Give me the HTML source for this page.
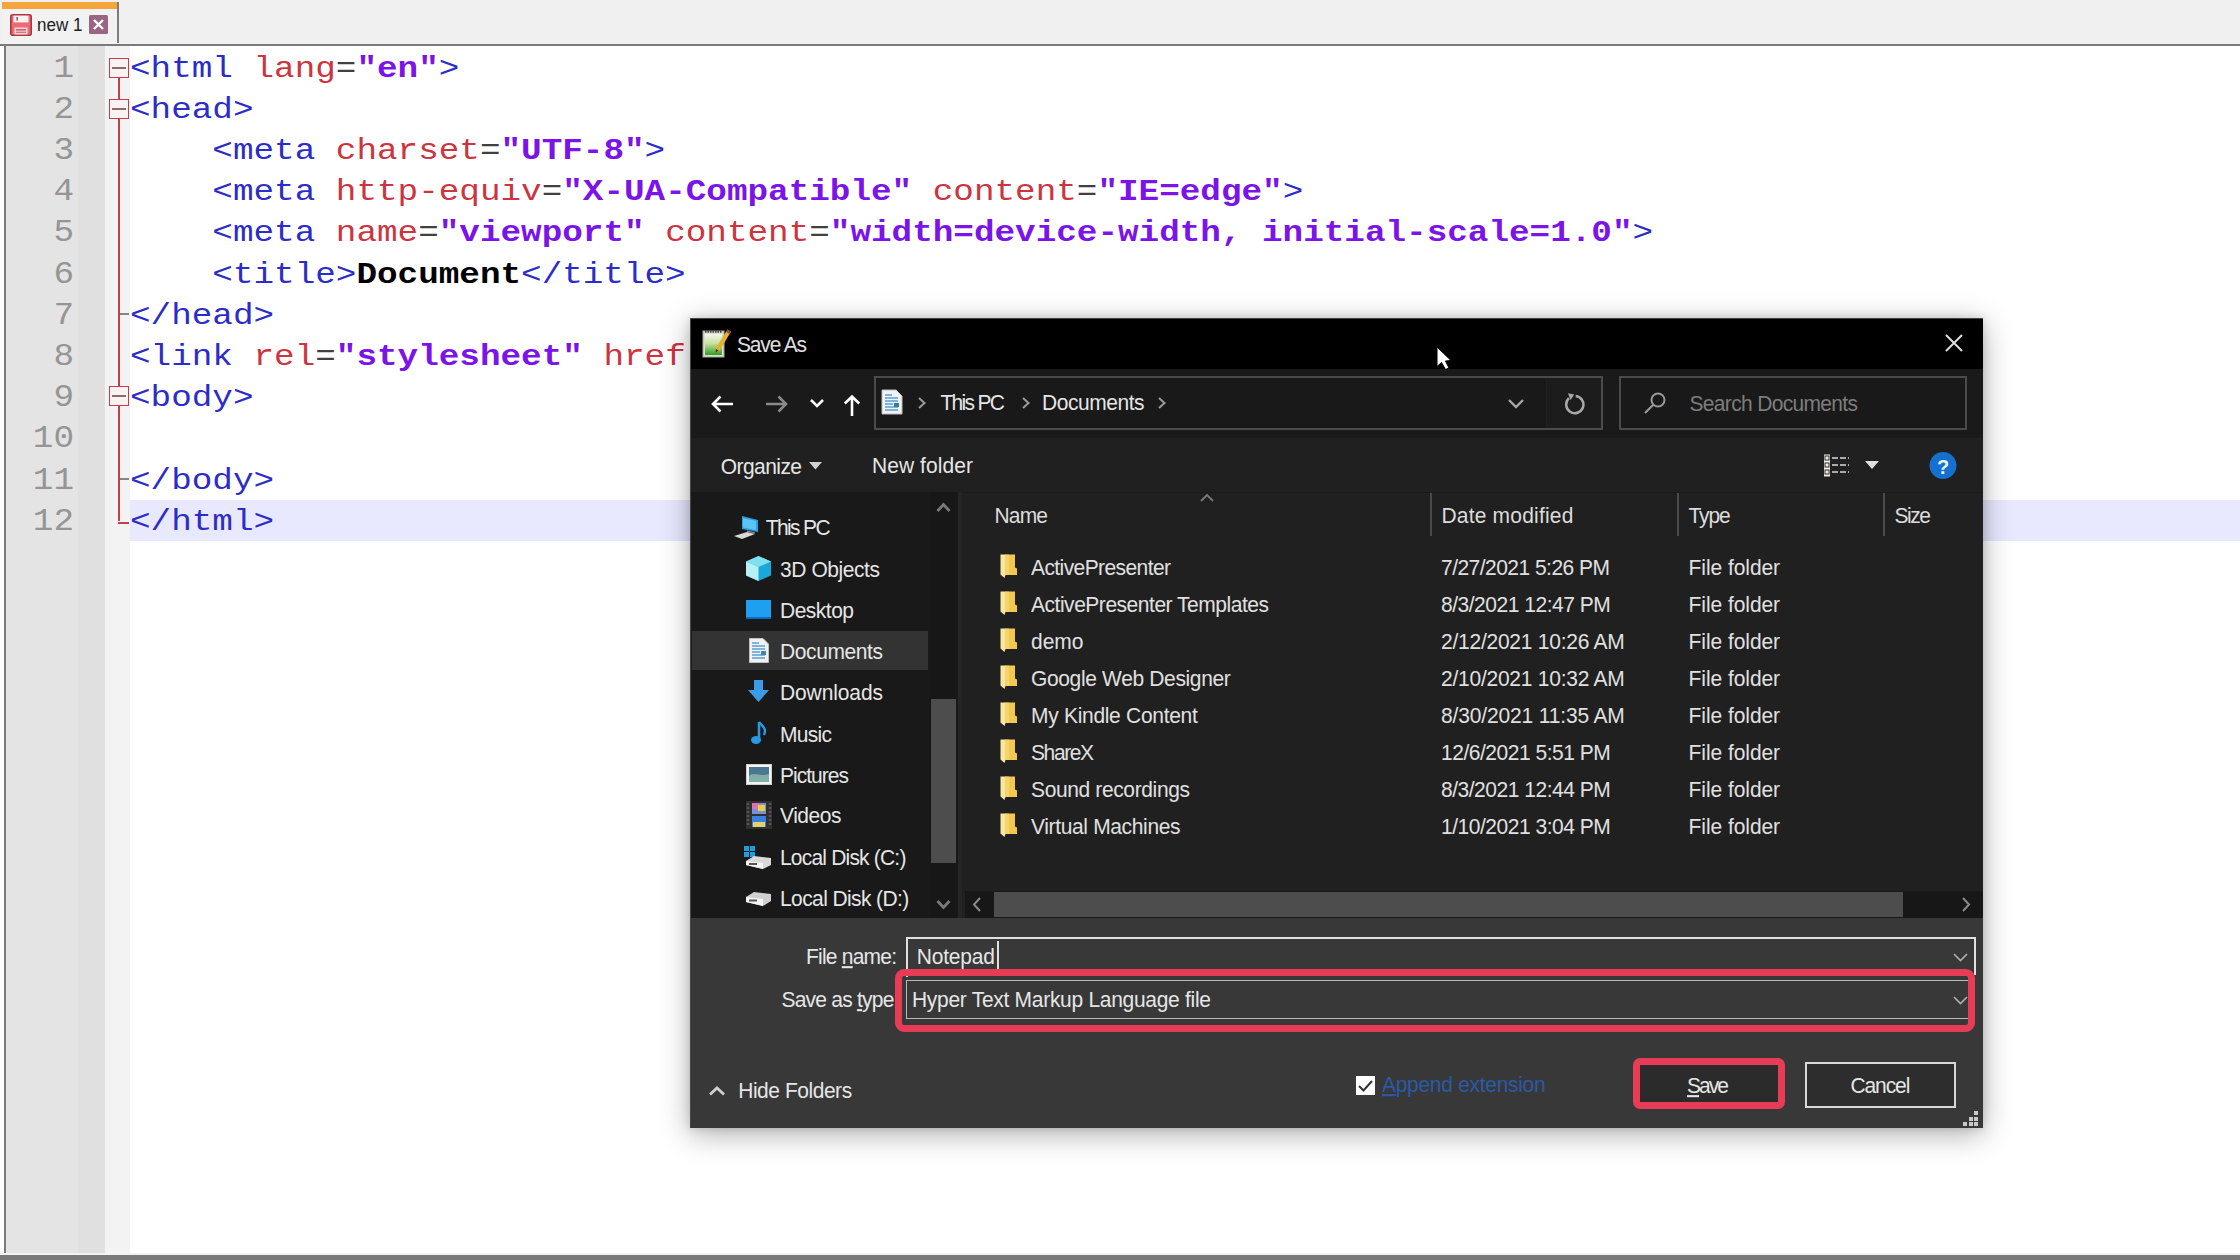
<!DOCTYPE html><html><head><meta charset="utf-8"><style>
*{margin:0;padding:0;box-sizing:border-box}
html,body{width:2240px;height:1260px;overflow:hidden;background:#fff;position:relative;font-family:"Liberation Sans",sans-serif}
.a{position:absolute}
.t{position:absolute;white-space:pre;line-height:1;font-family:"Liberation Sans",sans-serif}
.c{position:absolute;white-space:pre;line-height:1;font-family:"Liberation Mono",monospace;font-size:34.3px;color:#2c2cc8;transform:scaleY(0.87);transform-origin:0 26.3px}
.c b{color:#7a14e8}
.c i{font-style:normal;color:#cc3440}
.c u{text-decoration:none;color:#404040}
.c s{text-decoration:none;color:#000;font-weight:bold}
.ln{position:absolute;white-space:pre;line-height:1;font-family:"Liberation Mono",monospace;font-size:34.3px;color:#959595;text-align:right;width:70px;left:4px;transform:scaleY(0.93);transform-origin:0 26.3px}
</style></head><body>
<div class="a" style="left:0;top:0;width:2240px;height:44px;background:#f0f0f0"></div>
<div class="a" style="left:2px;top:2px;width:116px;height:42px;background:#f2f2f2"></div>
<div class="a" style="left:2px;top:2px;width:115px;height:7px;background:#f4a63c"></div>
<div class="a" style="left:117px;top:2px;width:2px;height:41px;background:#7d7d7d"></div>
<svg class="a" style="left:10px;top:14px" width="22" height="22" viewBox="0 0 22 22">
<rect x="0.8" y="0.8" width="20.4" height="20.4" rx="2" fill="#ee6a72" stroke="#a83840" stroke-width="1.6"/>
<rect x="3.5" y="1.6" width="15" height="6.8" fill="#fff0f0"/>
<rect x="6.5" y="3" width="1.3" height="3.5" fill="#7a4040"/>
<rect x="4.5" y="13.5" width="13" height="7" fill="#ffd6d8"/>
<rect x="6" y="15.2" width="10" height="1.3" fill="#b05060"/><rect x="6" y="17.6" width="10" height="1.5" fill="#d07880"/>
</svg>
<div class="t" style="left:37.0px;top:16.6px;font-size:17px;color:#202020;letter-spacing:0.000px;transform:scaleY(1.05);transform-origin:0 14.39px;">new 1</div>
<svg class="a" style="left:89px;top:15px" width="19" height="19" viewBox="0 0 19 19">
<rect x="0" y="0" width="19" height="19" rx="1.5" fill="#9a6482"/>
<path d="M5 5 L14 14 M14 5 L5 14" stroke="#fff" stroke-width="2.4"/>
</svg>
<div class="a" style="left:0;top:44px;width:2240px;height:2px;background:#7a7a7a"></div>
<div class="a" style="left:4px;top:44px;width:2px;height:1216px;background:#7a7a7a"></div>
<div class="a" style="left:0;top:1255px;width:2240px;height:5px;background:#7a7a7a"></div>
<div class="a" style="left:0;top:1253px;width:2240px;height:2px;background:#f3f3f3"></div>
<div class="a" style="left:6px;top:46px;width:72px;height:1207px;background:#e4e4e4"></div>
<div class="a" style="left:78px;top:46px;width:27px;height:1207px;background:#e0e0e0"></div>
<div class="a" style="left:105px;top:46px;width:25px;height:1207px;background:#f3f3f3"></div>
<div class="a" style="left:130px;top:500px;width:2110px;height:41px;background:#e8e8ff"></div>
<div class="ln" style="top:50.7px">1</div>
<div class="ln" style="top:91.9px">2</div>
<div class="ln" style="top:133.1px">3</div>
<div class="ln" style="top:174.3px">4</div>
<div class="ln" style="top:215.4px">5</div>
<div class="ln" style="top:256.6px">6</div>
<div class="ln" style="top:297.8px">7</div>
<div class="ln" style="top:339.0px">8</div>
<div class="ln" style="top:380.2px">9</div>
<div class="ln" style="top:421.3px">10</div>
<div class="ln" style="top:462.5px">11</div>
<div class="ln" style="top:503.7px">12</div>
<div class="a" style="left:118px;top:77px;width:2px;height:444px;background:#c0404c"></div>
<div class="a" style="left:109px;top:58px;width:20px;height:20px;border:1.6px solid #c83c48;background:#faf2f2"></div><div class="a" style="left:112px;top:67px;width:14px;height:2px;background:#8a6a6a"></div>
<div class="a" style="left:109px;top:99px;width:20px;height:20px;border:1.6px solid #c83c48;background:#faf2f2"></div><div class="a" style="left:112px;top:108px;width:14px;height:2px;background:#8a6a6a"></div>
<div class="a" style="left:109px;top:386px;width:20px;height:20px;border:1.6px solid #c83c48;background:#faf2f2"></div><div class="a" style="left:112px;top:395px;width:14px;height:2px;background:#8a6a6a"></div>
<div class="a" style="left:120px;top:313px;width:9px;height:2px;background:#858585"></div>
<div class="a" style="left:120px;top:478px;width:9px;height:2px;background:#858585"></div>
<div class="a" style="left:118px;top:522px;width:11px;height:2px;background:#c0404c"></div>
<div class="c" style="left:130.00px;top:50.7px">&lt;html <i>lang</i><u>=</u><b>"en"</b>&gt;</div>
<div class="c" style="left:130.00px;top:91.9px">&lt;head&gt;</div>
<div class="c" style="left:212.32px;top:133.1px">&lt;meta <i>charset</i><u>=</u><b>"UTF-8"</b>&gt;</div>
<div class="c" style="left:212.32px;top:174.3px">&lt;meta <i>http-equiv</i><u>=</u><b>"X-UA-Compatible"</b> <i>content</i><u>=</u><b>"IE=edge"</b>&gt;</div>
<div class="c" style="left:212.32px;top:215.4px">&lt;meta <i>name</i><u>=</u><b>"viewport"</b> <i>content</i><u>=</u><b>"width=device-width, initial-scale=1.0"</b>&gt;</div>
<div class="c" style="left:212.32px;top:256.6px">&lt;title&gt;<s>Document</s>&lt;/title&gt;</div>
<div class="c" style="left:130.00px;top:297.8px">&lt;/head&gt;</div>
<div class="c" style="left:130.00px;top:339.0px">&lt;link <i>rel</i><u>=</u><b>"stylesheet"</b> <i>href</i></div>
<div class="c" style="left:130.00px;top:380.2px">&lt;body&gt;</div>
<div class="c" style="left:130.00px;top:462.5px">&lt;/body&gt;</div>
<div class="c" style="left:130.00px;top:503.7px">&lt;/html&gt;</div>
<div class="a" style="left:690px;top:318px;width:1293px;height:810px;background:#383838;box-shadow:0 6px 28px rgba(0,0,0,0.32),0 0 8px rgba(0,0,0,0.15)"></div>
<div class="a" style="left:690px;top:318px;width:1293px;height:51px;background:#000"></div>
<div class="a" style="left:690px;top:369px;width:1293px;height:69px;background:#1a1a1a"></div>
<div class="a" style="left:690px;top:438px;width:1293px;height:54px;background:#202020"></div>
<div class="a" style="left:690px;top:492px;width:270px;height:426px;background:#191919"></div>
<div class="a" style="left:960px;top:492px;width:1023px;height:426px;background:#202020"></div>
<div class="a" style="left:960px;top:492px;width:1023px;height:1px;background:#1b1b1b"></div>
<div class="a" style="left:958px;top:492px;width:4px;height:426px;background:#252525"></div>
<div class="a" style="left:690px;top:318px;width:1293px;height:810px;border:1px solid #474747;border-bottom:none;border-right:none"></div>
<svg class="a" style="left:702px;top:328px" width="30" height="30" viewBox="0 0 30 30">
<defs><linearGradient id="ng" x1="0" y1="0" x2="0" y2="1"><stop offset="0" stop-color="#f4f8ec"/><stop offset="0.45" stop-color="#c8e0a0"/><stop offset="1" stop-color="#2ea020"/></linearGradient></defs>
<rect x="1" y="3" width="21" height="26" fill="#dcdcd4" stroke="#a8a8a0" stroke-width="1"/>
<rect x="3" y="6" width="17" height="21" fill="url(#ng)"/>
<path d="M3 3.5 h17" stroke="#404040" stroke-width="2.5" stroke-dasharray="1.5 1"/>
<path d="M29 3.5 L18 22 L13.5 25 L14 19.5 L25.5 1.5 Z" fill="#e8b030"/>
<path d="M25.5 1.5 L29 3.5 L27.5 6 L24 4 Z" fill="#8a5030"/>
<path d="M13.5 25 L14 21 L16.5 22.5 Z" fill="#403020"/>
</svg>
<div class="t" style="left:737.0px;top:334.2px;font-size:21px;color:#e0e0e0;letter-spacing:-1.167px;transform:scaleY(1.05);transform-origin:0 17.78px;">Save As</div>
<svg class="a" style="left:1944px;top:333px" width="20" height="20" viewBox="0 0 20 20"><path d="M2 2 L18 18 M18 2 L2 18" stroke="#e0e0e0" stroke-width="1.9"/></svg>
<svg class="a" style="left:710px;top:392px" width="25" height="24" viewBox="0 0 25 24"><path d="M3 12 H23 M10.5 4.5 L3 12 L10.5 19.5" stroke="#fff" stroke-width="2.6" fill="none"/></svg>
<svg class="a" style="left:764px;top:392px" width="25" height="24" viewBox="0 0 25 24"><path d="M22 12 H2 M14.5 4.5 L22 12 L14.5 19.5" stroke="#8a8a8a" stroke-width="2.6" fill="none"/></svg>
<svg class="a" style="left:809px;top:397px" width="16" height="12" viewBox="0 0 16 12"><path d="M2 3 L8 9 L14 3" stroke="#fff" stroke-width="2.6" fill="none"/></svg>
<svg class="a" style="left:840px;top:393px" width="24" height="24" viewBox="0 0 24 24"><path d="M12 23 V3.5 M4.8 10.5 L12 3.5 L19.2 10.5" stroke="#fff" stroke-width="2.6" fill="none"/></svg>
<div class="a" style="left:874px;top:376px;width:729px;height:54px;border:2px solid #4b4b4b;background:#191919"></div>
<div class="a" style="left:1546px;top:378px;width:55px;height:50px;background:#1c1c1c;border-left:1px solid #202020"></div>
<svg class="a" style="left:881px;top:389px" width="22" height="26" viewBox="0 0 22 26">
<path d="M1 1 H15 L21 7 V25 H1 Z" fill="#f2f2f2" stroke="#bdbdbd"/>
<path d="M4 6 H11 M4 9 H17 M4 12 H17 M4 15 H12 M4 18 H17 M4 21 H17" stroke="#5aa0d8" stroke-width="1.4"/>
<rect x="13" y="14" width="5" height="4" fill="#3a7a9a"/>
</svg>
<svg class="a" style="left:917px;top:396px" width="10" height="14" viewBox="0 0 10 14"><path d="M2 2 L7.5 7 L2 12" stroke="#9a9a9a" stroke-width="2" fill="none"/></svg>
<svg class="a" style="left:1157px;top:396px" width="10" height="14" viewBox="0 0 10 14"><path d="M2 2 L7.5 7 L2 12" stroke="#9a9a9a" stroke-width="2" fill="none"/></svg>
<svg class="a" style="left:1021px;top:396px" width="10" height="14" viewBox="0 0 10 14"><path d="M2 2 L7.5 7 L2 12" stroke="#9a9a9a" stroke-width="2" fill="none"/></svg>
<div class="t" style="left:940.4px;top:392.2px;font-size:21px;color:#e6e6e6;letter-spacing:-1.683px;transform:scaleY(1.05);transform-origin:0 17.78px;">This PC</div>
<div class="t" style="left:1042.0px;top:392.2px;font-size:21px;color:#e6e6e6;letter-spacing:-0.450px;transform:scaleY(1.05);transform-origin:0 17.78px;">Documents</div>
<svg class="a" style="left:1506px;top:397px" width="20" height="14" viewBox="0 0 20 14"><path d="M3 3 L10 10 L17 3" stroke="#a8a8a8" stroke-width="2.4" fill="none"/></svg>
<svg class="a" style="left:1561px;top:391px" width="26" height="24" viewBox="0 0 26 24"><path d="M14.7 5.0 A8.6 8.6 0 1 1 8.0 7.2" stroke="#a8a8a8" stroke-width="2.5" fill="none"/><path d="M7 2.2 L13.2 3.4 L9.6 9 Z" fill="#a8a8a8"/></svg>
<div class="a" style="left:1619px;top:376px;width:348px;height:54px;border:2px solid #4b4b4b;background:#191919"></div>
<svg class="a" style="left:1643px;top:391px" width="24" height="24" viewBox="0 0 24 24"><circle cx="15" cy="9" r="6.5" stroke="#9a9a9a" stroke-width="2" fill="none"/><path d="M10.5 13.5 L2 22" stroke="#9a9a9a" stroke-width="2.2"/></svg>
<div class="t" style="left:1689.5px;top:392.7px;font-size:21px;color:#7d7d7d;letter-spacing:-0.673px;transform:scaleY(1.05);transform-origin:0 17.78px;">Search Documents</div>
<div class="t" style="left:720.7px;top:455.7px;font-size:21px;color:#e6e6e6;letter-spacing:-0.557px;transform:scaleY(1.05);transform-origin:0 17.78px;">Organize</div>
<svg class="a" style="left:809px;top:462px" width="13" height="8" viewBox="0 0 13 8"><path d="M0 0 H13 L6.5 7.5 Z" fill="#d0d0d0"/></svg>
<div class="t" style="left:872.0px;top:455.2px;font-size:21px;color:#e6e6e6;letter-spacing:0.067px;transform:scaleY(1.05);transform-origin:0 17.78px;">New folder</div>
<svg class="a" style="left:1823px;top:454px" width="27" height="23" viewBox="0 0 27 23">
<rect x="1" y="0.5" width="6" height="22" fill="#f0ece4"/>
<rect x="2" y="2" width="4" height="4" fill="none" stroke="#333" stroke-width="1"/><rect x="2" y="9" width="4" height="4" fill="none" stroke="#333" stroke-width="1"/><rect x="2" y="16" width="4" height="4" fill="none" stroke="#333" stroke-width="1"/>
<path d="M9 4 H26 M9 11 H26 M9 18 H26" stroke="#d8d8d8" stroke-width="1.5" stroke-dasharray="6 2"/>
</svg>
<svg class="a" style="left:1865px;top:461px" width="14" height="9" viewBox="0 0 14 9"><path d="M0 0 H14 L7 8 Z" fill="#e0e0e0"/></svg>
<svg class="a" style="left:1929px;top:452px" width="28" height="28" viewBox="0 0 28 28"><circle cx="14" cy="13.5" r="13.5" fill="#1570d0"/><text x="14" y="21.5" text-anchor="middle" font-family="Liberation Sans" font-weight="bold" font-size="20" fill="#e8f4ff">?</text></svg>
<div class="a" style="left:692px;top:631px;width:236px;height:39px;background:#333333"></div>
<div class="a" style="left:930px;top:492px;width:27px;height:426px;background:#171717"></div>
<div class="a" style="left:931px;top:699px;width:25px;height:164px;background:#4d4d4d"></div>
<svg class="a" style="left:935px;top:500px" width="17" height="14" viewBox="0 0 17 14"><path d="M2.5 11 L8.5 4.5 L14.5 11" stroke="#7a7a7a" stroke-width="2.8" fill="none"/></svg>
<svg class="a" style="left:935px;top:898px" width="17" height="14" viewBox="0 0 17 14"><path d="M2.5 3 L8.5 9.5 L14.5 3" stroke="#7a7a7a" stroke-width="2.8" fill="none"/></svg>
<div class="t" style="left:765.7px;top:517.2px;font-size:21px;color:#e6e6e6;letter-spacing:-1.617px;transform:scaleY(1.05);transform-origin:0 17.78px;">This PC</div>
<div class="t" style="left:780.0px;top:558.6px;font-size:21px;color:#e6e6e6;letter-spacing:-0.433px;transform:scaleY(1.05);transform-origin:0 17.78px;">3D Objects</div>
<div class="t" style="left:780.0px;top:600.1px;font-size:21px;color:#e6e6e6;letter-spacing:-0.500px;transform:scaleY(1.05);transform-origin:0 17.78px;">Desktop</div>
<div class="t" style="left:780.0px;top:640.8px;font-size:21px;color:#e6e6e6;letter-spacing:-0.400px;transform:scaleY(1.05);transform-origin:0 17.78px;">Documents</div>
<div class="t" style="left:780.0px;top:682.2px;font-size:21px;color:#e6e6e6;letter-spacing:-0.113px;transform:scaleY(1.05);transform-origin:0 17.78px;">Downloads</div>
<div class="t" style="left:780.0px;top:723.7px;font-size:21px;color:#e6e6e6;letter-spacing:-0.700px;transform:scaleY(1.05);transform-origin:0 17.78px;">Music</div>
<div class="t" style="left:780.0px;top:765.2px;font-size:21px;color:#e6e6e6;letter-spacing:-0.986px;transform:scaleY(1.05);transform-origin:0 17.78px;">Pictures</div>
<div class="t" style="left:780.0px;top:805.2px;font-size:21px;color:#e6e6e6;letter-spacing:-0.480px;transform:scaleY(1.05);transform-origin:0 17.78px;">Videos</div>
<div class="t" style="left:780.0px;top:846.5px;font-size:21px;color:#e6e6e6;letter-spacing:-0.807px;transform:scaleY(1.05);transform-origin:0 17.78px;">Local Disk (C:)</div>
<div class="t" style="left:780.0px;top:887.9px;font-size:21px;color:#e6e6e6;letter-spacing:-0.600px;transform:scaleY(1.05);transform-origin:0 17.78px;">Local Disk (D:)</div>
<svg class="a" style="left:733px;top:515px" width="27" height="26" viewBox="0 0 27 26">
<path d="M9 1 L25 5 V17 L9 14 Z" fill="#2a9fe8"/><path d="M10 3 L23 6 V15 L10 12.5 Z" fill="#5cc4f5"/>
<path d="M1 21 L14 17 L22 19 L9 24 Z" fill="#d8d8d8"/><path d="M14 16 L22 18" stroke="#aaa" stroke-width="1"/>
</svg>
<svg class="a" style="left:745px;top:555px" width="27" height="27" viewBox="0 0 27 27">
<path d="M13.5 1 L26 6.5 V20.5 L13.5 26 L1 20.5 V6.5 Z" fill="#1aa8d8"/>
<path d="M13.5 1 L26 6.5 L13.5 12 L1 6.5 Z" fill="#7fe0f0"/>
<path d="M1 6.5 L13.5 12 V26 L1 20.5 Z" fill="#b8f0f8"/>
</svg>
<div class="a" style="left:746px;top:600px;width:25px;height:19px;background:#1e9ff0;border-bottom:2px solid #0a6ac0"></div>
<svg class="a" style="left:749px;top:638px" width="20" height="25" viewBox="0 0 20 25">
<path d="M0.5 0.5 H14 L19.5 6 V24.5 H0.5 Z" fill="#f2f2f2" stroke="#c0c0c0"/>
<path d="M3 5 H10 M3 8 H16 M3 11 H16 M3 14 H11 M3 17 H16 M3 20 H16" stroke="#5aa0d8" stroke-width="1.3"/>
<rect x="12" y="13" width="5" height="4" fill="#3a8a9a"/>
</svg>
<svg class="a" style="left:746px;top:679px" width="25" height="25" viewBox="0 0 25 25"><path d="M8 1 H17 V11 H23 L12.5 23 L2 11 H8 Z" fill="#3a9ce8"/></svg>
<svg class="a" style="left:750px;top:720px" width="20" height="25" viewBox="0 0 20 25"><path d="M9 2 V19" stroke="#2a9ae0" stroke-width="2.6"/><ellipse cx="6" cy="20" rx="5" ry="4" fill="#2a9ae0"/><path d="M9 2 C12 6 17 8 14 15" stroke="#2a9ae0" stroke-width="2.4" fill="none"/></svg>
<svg class="a" style="left:746px;top:764px" width="26" height="21" viewBox="0 0 26 21">
<rect x="0.5" y="0.5" width="25" height="20" fill="#f4f4f4" stroke="#d0d0d0"/><rect x="3" y="3" width="20" height="15" fill="#4a7890"/>
<path d="M3 12 C8 8 14 13 23 10 V18 H3 Z" fill="#80b0a8"/>
</svg>
<svg class="a" style="left:746px;top:801px" width="26" height="28" viewBox="0 0 26 28">
<rect x="0" y="0" width="26" height="28" fill="#303030"/>
<path d="M2 2 V26 M24 2 V26" stroke="#555" stroke-width="2.5" stroke-dasharray="2 2"/>
<rect x="6" y="2" width="14" height="11" fill="#7a90d8"/><rect x="6" y="2" width="7" height="6" fill="#e070b0"/><rect x="12" y="4" width="7" height="6" fill="#e8d040"/>
<rect x="6" y="15" width="14" height="11" fill="#3a80e0"/><rect x="7" y="21" width="12" height="5" fill="#e8d070"/>
</svg>
<svg class="a" style="left:744px;top:846px" width="28" height="24" viewBox="0 0 28 24">
<rect x="0" y="0" width="5" height="5" fill="#1aa0e0"/><rect x="6" y="0" width="5" height="5" fill="#1aa0e0"/><rect x="0" y="6" width="5" height="5" fill="#1aa0e0"/><rect x="6" y="6" width="5" height="5" fill="#1aa0e0"/>
<path d="M2 15 L10 10 L27 12 V19 L19 23 L2 19 Z" fill="#d8d8d8"/><path d="M2 15 L19 17 V23 L2 19 Z" fill="#f4f4f4"/><rect x="5" y="17" width="8" height="2" fill="#555"/>
</svg>
<svg class="a" style="left:744px;top:891px" width="28" height="16" viewBox="0 0 28 16">
<path d="M2 6 L10 1 L27 3 V10 L19 15 L2 11 Z" fill="#d0d0d0"/><path d="M2 6 L19 8 V15 L2 11 Z" fill="#f4f4f4"/><rect x="5" y="8.5" width="8" height="2" fill="#555"/>
</svg>
<svg class="a" style="left:1199px;top:492px" width="16" height="11" viewBox="0 0 16 11"><path d="M2 9 L8 3 L14 9" stroke="#7a7a7a" stroke-width="1.8" fill="none"/></svg>
<div class="a" style="left:1430px;top:493px;width:2px;height:43px;background:#4a4a4a"></div>
<div class="a" style="left:1677px;top:493px;width:2px;height:43px;background:#4a4a4a"></div>
<div class="a" style="left:1883px;top:493px;width:2px;height:43px;background:#4a4a4a"></div>
<div class="t" style="left:994.4px;top:505.2px;font-size:21px;color:#dcdcdc;letter-spacing:-0.800px;transform:scaleY(1.05);transform-origin:0 17.78px;">Name</div>
<div class="t" style="left:1441.4px;top:505.2px;font-size:21px;color:#dcdcdc;letter-spacing:0.200px;transform:scaleY(1.05);transform-origin:0 17.78px;">Date modified</div>
<div class="t" style="left:1688.6px;top:505.2px;font-size:21px;color:#dcdcdc;letter-spacing:-1.167px;transform:scaleY(1.05);transform-origin:0 17.78px;">Type</div>
<div class="t" style="left:1894.4px;top:505.2px;font-size:21px;color:#dcdcdc;letter-spacing:-1.433px;transform:scaleY(1.05);transform-origin:0 17.78px;">Size</div>
<svg class="a" style="left:1000px;top:554px" width="18" height="24" viewBox="0 0 18 24">
<path d="M0.5 0.5 H5.5 V21 L4.5 24 L0.5 20.5 Z" fill="#fbe6a0"/><path d="M5 0.5 H15 V13.5 L17 14.5 V21 H5 Z" fill="#f2c850"/><path d="M5 0.5 H9 V21 H5 Z" fill="#f6d878" opacity="0.7"/>
</svg>
<div class="t" style="left:1031.0px;top:557.2px;font-size:21px;color:#e0e0e0;letter-spacing:-0.586px;transform:scaleY(1.05);transform-origin:0 17.78px;">ActivePresenter</div>
<div class="t" style="left:1441.0px;top:557.2px;font-size:21px;color:#e0e0e0;letter-spacing:-0.531px;transform:scaleY(1.05);transform-origin:0 17.78px;">7/27/2021 5:26 PM</div>
<div class="t" style="left:1688.6px;top:557.2px;font-size:21px;color:#e0e0e0;letter-spacing:-0.070px;transform:scaleY(1.05);transform-origin:0 17.78px;">File folder</div>
<svg class="a" style="left:1000px;top:591px" width="18" height="24" viewBox="0 0 18 24">
<path d="M0.5 0.5 H5.5 V21 L4.5 24 L0.5 20.5 Z" fill="#fbe6a0"/><path d="M5 0.5 H15 V13.5 L17 14.5 V21 H5 Z" fill="#f2c850"/><path d="M5 0.5 H9 V21 H5 Z" fill="#f6d878" opacity="0.7"/>
</svg>
<div class="t" style="left:1031.0px;top:594.2px;font-size:21px;color:#e0e0e0;letter-spacing:-0.475px;transform:scaleY(1.05);transform-origin:0 17.78px;">ActivePresenter Templates</div>
<div class="t" style="left:1441.0px;top:594.2px;font-size:21px;color:#e0e0e0;letter-spacing:-0.481px;transform:scaleY(1.05);transform-origin:0 17.78px;">8/3/2021 12:47 PM</div>
<div class="t" style="left:1688.6px;top:594.2px;font-size:21px;color:#e0e0e0;letter-spacing:-0.070px;transform:scaleY(1.05);transform-origin:0 17.78px;">File folder</div>
<svg class="a" style="left:1000px;top:628px" width="18" height="24" viewBox="0 0 18 24">
<path d="M0.5 0.5 H5.5 V21 L4.5 24 L0.5 20.5 Z" fill="#fbe6a0"/><path d="M5 0.5 H15 V13.5 L17 14.5 V21 H5 Z" fill="#f2c850"/><path d="M5 0.5 H9 V21 H5 Z" fill="#f6d878" opacity="0.7"/>
</svg>
<div class="t" style="left:1031.0px;top:631.2px;font-size:21px;color:#e0e0e0;letter-spacing:-0.033px;transform:scaleY(1.05);transform-origin:0 17.78px;">demo</div>
<div class="t" style="left:1441.0px;top:631.2px;font-size:21px;color:#e0e0e0;letter-spacing:-0.247px;transform:scaleY(1.05);transform-origin:0 17.78px;">2/12/2021 10:26 AM</div>
<div class="t" style="left:1688.6px;top:631.2px;font-size:21px;color:#e0e0e0;letter-spacing:-0.070px;transform:scaleY(1.05);transform-origin:0 17.78px;">File folder</div>
<svg class="a" style="left:1000px;top:665px" width="18" height="24" viewBox="0 0 18 24">
<path d="M0.5 0.5 H5.5 V21 L4.5 24 L0.5 20.5 Z" fill="#fbe6a0"/><path d="M5 0.5 H15 V13.5 L17 14.5 V21 H5 Z" fill="#f2c850"/><path d="M5 0.5 H9 V21 H5 Z" fill="#f6d878" opacity="0.7"/>
</svg>
<div class="t" style="left:1031.0px;top:668.2px;font-size:21px;color:#e0e0e0;letter-spacing:-0.356px;transform:scaleY(1.05);transform-origin:0 17.78px;">Google Web Designer</div>
<div class="t" style="left:1441.0px;top:668.2px;font-size:21px;color:#e0e0e0;letter-spacing:-0.247px;transform:scaleY(1.05);transform-origin:0 17.78px;">2/10/2021 10:32 AM</div>
<div class="t" style="left:1688.6px;top:668.2px;font-size:21px;color:#e0e0e0;letter-spacing:-0.070px;transform:scaleY(1.05);transform-origin:0 17.78px;">File folder</div>
<svg class="a" style="left:1000px;top:702px" width="18" height="24" viewBox="0 0 18 24">
<path d="M0.5 0.5 H5.5 V21 L4.5 24 L0.5 20.5 Z" fill="#fbe6a0"/><path d="M5 0.5 H15 V13.5 L17 14.5 V21 H5 Z" fill="#f2c850"/><path d="M5 0.5 H9 V21 H5 Z" fill="#f6d878" opacity="0.7"/>
</svg>
<div class="t" style="left:1031.0px;top:705.2px;font-size:21px;color:#e0e0e0;letter-spacing:-0.300px;transform:scaleY(1.05);transform-origin:0 17.78px;">My Kindle Content</div>
<div class="t" style="left:1441.0px;top:705.2px;font-size:21px;color:#e0e0e0;letter-spacing:-0.153px;transform:scaleY(1.05);transform-origin:0 17.78px;">8/30/2021 11:35 AM</div>
<div class="t" style="left:1688.6px;top:705.2px;font-size:21px;color:#e0e0e0;letter-spacing:-0.070px;transform:scaleY(1.05);transform-origin:0 17.78px;">File folder</div>
<svg class="a" style="left:1000px;top:739px" width="18" height="24" viewBox="0 0 18 24">
<path d="M0.5 0.5 H5.5 V21 L4.5 24 L0.5 20.5 Z" fill="#fbe6a0"/><path d="M5 0.5 H15 V13.5 L17 14.5 V21 H5 Z" fill="#f2c850"/><path d="M5 0.5 H9 V21 H5 Z" fill="#f6d878" opacity="0.7"/>
</svg>
<div class="t" style="left:1031.0px;top:742.2px;font-size:21px;color:#e0e0e0;letter-spacing:-1.400px;transform:scaleY(1.05);transform-origin:0 17.78px;">ShareX</div>
<div class="t" style="left:1441.0px;top:742.2px;font-size:21px;color:#e0e0e0;letter-spacing:-0.481px;transform:scaleY(1.05);transform-origin:0 17.78px;">12/6/2021 5:51 PM</div>
<div class="t" style="left:1688.6px;top:742.2px;font-size:21px;color:#e0e0e0;letter-spacing:-0.070px;transform:scaleY(1.05);transform-origin:0 17.78px;">File folder</div>
<svg class="a" style="left:1000px;top:776px" width="18" height="24" viewBox="0 0 18 24">
<path d="M0.5 0.5 H5.5 V21 L4.5 24 L0.5 20.5 Z" fill="#fbe6a0"/><path d="M5 0.5 H15 V13.5 L17 14.5 V21 H5 Z" fill="#f2c850"/><path d="M5 0.5 H9 V21 H5 Z" fill="#f6d878" opacity="0.7"/>
</svg>
<div class="t" style="left:1031.0px;top:779.2px;font-size:21px;color:#e0e0e0;letter-spacing:-0.373px;transform:scaleY(1.05);transform-origin:0 17.78px;">Sound recordings</div>
<div class="t" style="left:1441.0px;top:779.2px;font-size:21px;color:#e0e0e0;letter-spacing:-0.481px;transform:scaleY(1.05);transform-origin:0 17.78px;">8/3/2021 12:44 PM</div>
<div class="t" style="left:1688.6px;top:779.2px;font-size:21px;color:#e0e0e0;letter-spacing:-0.070px;transform:scaleY(1.05);transform-origin:0 17.78px;">File folder</div>
<svg class="a" style="left:1000px;top:813px" width="18" height="24" viewBox="0 0 18 24">
<path d="M0.5 0.5 H5.5 V21 L4.5 24 L0.5 20.5 Z" fill="#fbe6a0"/><path d="M5 0.5 H15 V13.5 L17 14.5 V21 H5 Z" fill="#f2c850"/><path d="M5 0.5 H9 V21 H5 Z" fill="#f6d878" opacity="0.7"/>
</svg>
<div class="t" style="left:1031.0px;top:816.2px;font-size:21px;color:#e0e0e0;letter-spacing:-0.353px;transform:scaleY(1.05);transform-origin:0 17.78px;">Virtual Machines</div>
<div class="t" style="left:1441.0px;top:816.2px;font-size:21px;color:#e0e0e0;letter-spacing:-0.481px;transform:scaleY(1.05);transform-origin:0 17.78px;">1/10/2021 3:04 PM</div>
<div class="t" style="left:1688.6px;top:816.2px;font-size:21px;color:#e0e0e0;letter-spacing:-0.070px;transform:scaleY(1.05);transform-origin:0 17.78px;">File folder</div>
<div class="a" style="left:965px;top:891px;width:1018px;height:27px;background:#171717"></div>
<div class="a" style="left:994px;top:892px;width:909px;height:25px;background:#4d4d4d"></div>
<svg class="a" style="left:970px;top:896px" width="14" height="17" viewBox="0 0 14 17"><path d="M10 2 L4 8.5 L10 15" stroke="#8a8a8a" stroke-width="2" fill="none"/></svg>
<svg class="a" style="left:1959px;top:896px" width="14" height="17" viewBox="0 0 14 17"><path d="M4 2 L10 8.5 L4 15" stroke="#8a8a8a" stroke-width="2" fill="none"/></svg>
<div class="t" style="left:806.0px;top:946.2px;font-size:21px;color:#e6e6e6;letter-spacing:-0.778px;transform:scaleY(1.05);transform-origin:0 17.78px;">File <span style="text-decoration:underline">n</span>ame:</div>
<div class="a" style="left:906px;top:937px;width:70px;height:40px;border:2px solid #e0e0e0;border-right:none;border-bottom:none"></div>
<div class="a" style="left:906px;top:937px;width:1070px;height:38px;border-top:2px solid #e0e0e0;border-left:2px solid #e0e0e0;border-right:2px solid #e0e0e0"></div>
<div class="t" style="left:916.7px;top:946.2px;font-size:21px;color:#e6e6e6;letter-spacing:-0.183px;transform:scaleY(1.05);transform-origin:0 17.78px;">Notepad</div>
<div class="a" style="left:997px;top:941px;width:2px;height:29px;background:#e0e0e0"></div>
<svg class="a" style="left:1952px;top:951px" width="17" height="12" viewBox="0 0 17 12"><path d="M2 3 L8.5 9.5 L15 3" stroke="#b0b0b0" stroke-width="1.6" fill="none"/></svg>
<div class="t" style="left:781.4px;top:989.2px;font-size:21px;color:#e6e6e6;letter-spacing:-0.767px;transform:scaleY(1.05);transform-origin:0 17.78px;">Save as <span style="text-decoration:underline">t</span>ype:</div>
<div class="a" style="left:906px;top:980px;width:1062px;height:39px;border:1.5px solid #b8b8b8;border-right:none"></div>
<div class="t" style="left:912.0px;top:989.2px;font-size:21px;color:#e6e6e6;letter-spacing:-0.293px;transform:scaleY(1.05);transform-origin:0 17.78px;">Hyper Text Markup Language file</div>
<svg class="a" style="left:1952px;top:994px" width="17" height="12" viewBox="0 0 17 12"><path d="M2 3 L8.5 9.5 L15 3" stroke="#b0b0b0" stroke-width="1.6" fill="none"/></svg>
<div class="a" style="left:895px;top:969px;width:80px;height:63px;border:7px solid #e63c55;border-radius:9px;width:1080px"></div>
<svg class="a" style="left:707px;top:1084px" width="20" height="13" viewBox="0 0 20 13"><path d="M3 10.5 L10 4 L17 10.5" stroke="#d0d0d0" stroke-width="2.8" fill="none"/></svg>
<div class="t" style="left:738.2px;top:1080.0px;font-size:21px;color:#e6e6e6;letter-spacing:-0.464px;transform:scaleY(1.05);transform-origin:0 17.78px;">Hide Folders</div>
<div class="a" style="left:1356px;top:1076px;width:19px;height:19px;background:#fff"></div>
<svg class="a" style="left:1356px;top:1076px" width="19" height="19" viewBox="0 0 19 19"><path d="M3 10 L7.5 14.5 L16 5" stroke="#333" stroke-width="2" fill="none"/></svg>
<div class="t" style="left:1382.0px;top:1073.8px;font-size:21px;color:#2a5aa6;letter-spacing:-0.300px;transform:scaleY(1.05);transform-origin:0 17.78px;"><span style="text-decoration:underline">A</span>ppend extension</div>
<div class="a" style="left:1640px;top:1065px;width:139px;height:37px;background:#2b2b2b"></div>
<div class="a" style="left:1633px;top:1058px;width:152px;height:51px;border:7px solid #e63c55;border-radius:7px"></div>
<div class="t" style="left:1687.0px;top:1074.7px;font-size:21px;color:#e6e6e6;letter-spacing:-1.967px;transform:scaleY(1.05);transform-origin:0 17.78px;"><span style="text-decoration:underline">S</span>ave</div>
<div class="a" style="left:1805px;top:1062px;width:151px;height:46px;border:2.5px solid #d8d8d8;background:#2d2d2d"></div>
<div class="t" style="left:1850.4px;top:1074.7px;font-size:21px;color:#e6e6e6;letter-spacing:-1.080px;transform:scaleY(1.05);transform-origin:0 17.78px;">Cancel</div>
<div class="a" style="left:1974px;top:1111px;width:4px;height:4px;background:#c8c8c8"></div>
<div class="a" style="left:1968.5px;top:1116.5px;width:4px;height:4px;background:#c8c8c8"></div>
<div class="a" style="left:1974px;top:1116.5px;width:4px;height:4px;background:#c8c8c8"></div>
<div class="a" style="left:1963px;top:1122px;width:4px;height:4px;background:#c8c8c8"></div>
<div class="a" style="left:1968.5px;top:1122px;width:4px;height:4px;background:#c8c8c8"></div>
<div class="a" style="left:1974px;top:1122px;width:4px;height:4px;background:#c8c8c8"></div>
<svg class="a" style="left:1436px;top:346px" width="18" height="26" viewBox="0 0 18 26">
<path d="M1 1 L1 20.5 L5.5 16.5 L9.5 23.5 L13 22 L9.5 15 L15 14.5 Z" fill="#fff" stroke="#000" stroke-width="1"/>
</svg>
</body></html>
